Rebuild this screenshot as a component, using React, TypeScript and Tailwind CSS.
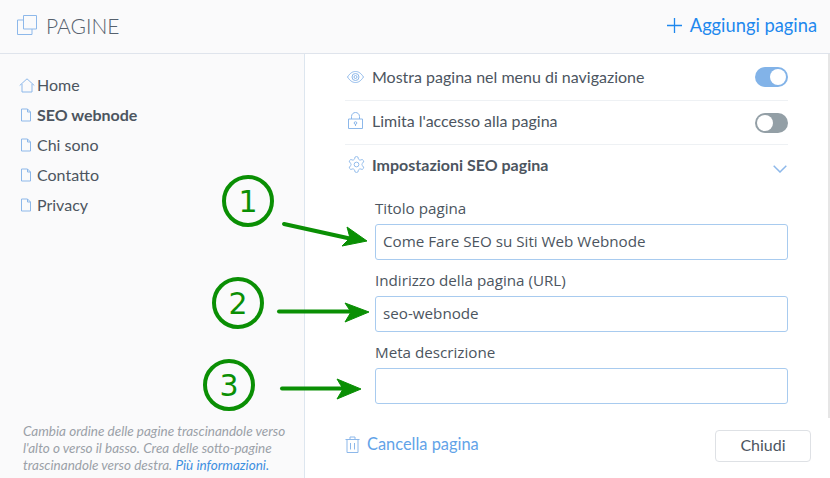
const pages = [
  { label: 'SEO webnode', bold: true },
  { label: 'Chi sono' },
  { label: 'Contatto' },
  { label: 'Privacy' },
]

function PageIcon() {
  return (
    <svg width="12" height="14" viewBox="0 0 12 14" fill="none" stroke="#8db8ea" strokeWidth="1" className="shrink-0">
      <path d="M1.5 1 H7.5 L10.5 4 V13 H1.5 Z M7.5 1 V4 H10.5" />
    </svg>
  )
}

function Toggle({ on }: { on: boolean }) {
  return (
    <div className={`flex h-5 w-[33px] items-center rounded-full px-[2px] ${on ? 'justify-end bg-[#82b3e8]' : 'justify-start bg-[#939fa6]'}`}>
      <div className="h-4 w-4 rounded-full bg-white" />
    </div>
  )
}

function Field({ label, value }: { label: string; value: string }) {
  return (
    <div className="flex flex-col">
      <label className="mb-[7px] h-[18px] font-['Open_Sans',sans-serif] text-[15.2px] leading-[18px] text-[#4c5560]">{label}</label>
      <div className="flex h-[36px] items-center rounded-[3px] border border-[#a8cbef] bg-white px-[7px] pb-[2px] font-['Open_Sans',sans-serif] text-[15.2px] text-[#4c5560]">
        {value}
      </div>
    </div>
  )
}

// green annotation: numbered ring plus arrow, drawn over the page
function Annotations() {
  return (
    <svg width="830" height="478" viewBox="0 0 830 478" className="pointer-events-none absolute left-0 top-0" fill="none" stroke="#0a8f04">
      <circle cx="248" cy="201" r="24" strokeWidth="4" />
      <circle cx="238" cy="303" r="24" strokeWidth="4" />
      <circle cx="229" cy="385" r="24" strokeWidth="4" />
      <path d="M284 224 L352 239" strokeWidth="4" strokeLinecap="round" />
      <path d="M347 227 L367 241 L342 246 L350 238 Z" fill="#0a8f04" strokeWidth="1" />
      <path d="M279 311.5 L352 311.5" strokeWidth="4" strokeLinecap="round" />
      <path d="M345 303 L369 312 L345 322 L351 312 Z" fill="#0a8f04" strokeWidth="1" />
      <path d="M282 388.5 L345 388.5" strokeWidth="4" strokeLinecap="round" />
      <path d="M337 379 L361 389 L337 399 L343 389 Z" fill="#0a8f04" strokeWidth="1" />
      <g fill="#0a8f04" stroke="none" fontFamily="'DejaVu Sans', sans-serif" fontSize="30" textAnchor="middle">
        <text x="248" y="212">1</text>
        <text x="238" y="314">2</text>
        <text x="229" y="396">3</text>
      </g>
    </svg>
  )
}

export default function App() {
  return (
    <div className="relative flex h-[478px] w-[830px] flex-col overflow-hidden bg-white font-['Lato',sans-serif] text-[#4c5560]">
      <header className="flex h-[54px] shrink-0 items-center justify-between border-b border-[#dfe4ec] bg-[#fafafb] pb-[2px] pl-[17px] pr-[13px]">
        <div className="flex items-center gap-[9px]">
          <svg width="20" height="20" viewBox="0 0 20 20" fill="none" stroke="#8db8ea" strokeWidth="1" className="-mt-[2px]">
            <path d="M6.5 .5 H19.5 V14 H6.5 Z" />
            <path d="M6.5 5 H.5 V19.5 H15 V14" />
          </svg>
          <span className="text-[21px] font-light text-[#56616e]">PAGINE</span>
        </div>
        <div className="flex items-center gap-[8px] text-[#1e88ee]">
          <svg width="15" height="15" viewBox="0 0 15 15" stroke="#1e88ee" strokeWidth="1.3">
            <path d="M7.5 0 V15 M0 7.5 H15" />
          </svg>
          <span className="text-[18.3px]">Aggiungi pagina</span>
        </div>
      </header>

      <div className="flex min-h-0 flex-1">
        <aside className="flex w-[305px] shrink-0 flex-col justify-between border-r border-[#dde6ef] bg-[#fafafb] pb-[4px] pl-[23px] pr-[14px]">
          <nav className="flex flex-col pt-[16px] text-[16px]">
            <div className="-ml-[4px] flex h-[30px] items-center gap-[2px]">
              <svg width="16" height="15" viewBox="0 0 16 15" fill="none" stroke="#8db8ea" strokeWidth="1">
                <path d="M.7 7.5 L8 .8 L15.3 7.5 M3 6 V14 H13 V6" />
              </svg>
              <span>Home</span>
            </div>
            {pages.map(p => (
              <div key={p.label} className={`-ml-[3px] flex h-[30px] items-center gap-[5px] ${p.bold ? 'font-bold' : ''}`}>
                <PageIcon />
                <span>{p.label}</span>
              </div>
            ))}
          </nav>
          <p className="text-[13.5px] italic leading-[17px] text-[#9ba1a8]">
            Cambia ordine delle pagine trascinandole verso l'alto o verso il basso. Crea delle sotto-pagine trascinandole verso destra.{' '}
            <span className="text-[#3e8fe0]">Più informazioni.</span>
          </p>
        </aside>

        <main className="flex min-w-0 flex-1 flex-col">
          <div className="flex min-h-0 flex-1">
            <div className="flex h-[364px] w-[483px] shrink-0 flex-col pl-[40px] text-[16px]">
              <div className="flex h-[47px] items-center justify-between border-b border-[#eef1f4]">
                <div className="flex items-center gap-[8px] pl-[2px]">
                  <svg width="17" height="12" viewBox="0 0 17 12" fill="none" stroke="#8db8ea" strokeWidth="1">
                    <path d="M.5 6 C3.5 1.5 6 .5 8.5 .5 C11 .5 13.5 1.5 16.5 6 C13.5 10.5 11 11.5 8.5 11.5 C6 11.5 3.5 10.5 .5 6 Z" />
                    <circle cx="8.5" cy="6" r="3.5" />
                    <circle cx="8.5" cy="6" r="1.5" />
                  </svg>
                  <span>Mostra pagina nel menu di navigazione</span>
                </div>
                <Toggle on />
              </div>
              <div className="flex h-[44px] items-center justify-between border-b border-[#eef1f4]">
                <div className="flex items-center gap-[9px] pb-[4px] pl-[3px]">
                  <svg width="15" height="17" viewBox="0 0 15 17" fill="none" stroke="#8db8ea" strokeWidth="1">
                    <path d="M.5 7 H14.5 V16.5 H.5 Z M3.5 7 V4.5 C3.5 2 5.5 .5 7.5 .5 C9.5 .5 11.5 2 11.5 4.5 V7" />
                    <circle cx="7.5" cy="11" r="1.3" />
                    <path d="M7.5 12 V14" />
                  </svg>
                  <span>Limita l'accesso alla pagina</span>
                </div>
                <Toggle on={false} />
              </div>
              <div className="flex h-[43px] items-center justify-between">
                <div className="flex items-center gap-[6px] pb-[4px] pl-[2px]">
                  <svg width="19" height="19" viewBox="0 0 24 24" fill="none" stroke="#8db8ea" strokeWidth="1.2">
                    <path d="M12.22 2h-.44a2 2 0 0 0-2 2v.18a2 2 0 0 1-1 1.73l-.43.25a2 2 0 0 1-2 0l-.15-.08a2 2 0 0 0-2.73.73l-.22.38a2 2 0 0 0 .73 2.73l.15.1a2 2 0 0 1 1 1.72v.51a2 2 0 0 1-1 1.74l-.15.09a2 2 0 0 0-.73 2.73l.22.38a2 2 0 0 0 2.73.73l.15-.08a2 2 0 0 1 2 0l.43.25a2 2 0 0 1 1 1.73V20a2 2 0 0 0 2 2h.44a2 2 0 0 0 2-2v-.18a2 2 0 0 1 1-1.73l.43-.25a2 2 0 0 1 2 0l.15.08a2 2 0 0 0 2.73-.73l.22-.39a2 2 0 0 0-.73-2.73l-.15-.08a2 2 0 0 1-1-1.74v-.5a2 2 0 0 1 1-1.74l.15-.09a2 2 0 0 0 .73-2.73l-.22-.38a2 2 0 0 0-2.73-.73l-.15.08a2 2 0 0 1-2 0l-.43-.25a2 2 0 0 1-1-1.73V4a2 2 0 0 0-2-2z" />
                    <circle cx="12" cy="12" r="3" />
                  </svg>
                  <span className="font-bold">Impostazioni SEO pagina</span>
                </div>
                <svg width="14" height="8" viewBox="0 0 14 8" fill="none" stroke="#8db8ea" strokeWidth="1.5" className="mr-px mt-[4px]">
                  <path d="M.7 .7 L7 7 L13.3 .7" />
                </svg>
              </div>
              <div className="flex flex-col gap-[11px] pl-[30px] pt-[11px]">
                <Field label="Titolo pagina" value="Come Fare SEO su Siti Web Webnode" />
                <Field label="Indirizzo della pagina (URL)" value="seo-webnode" />
                <Field label="Meta descrizione" value="" />
              </div>
            </div>
            <div className="ml-auto h-[364px] w-[2px] bg-[#e6e6e6]" />
          </div>
          <footer className="flex h-[60px] shrink-0 items-start justify-between pl-[40px] pr-[19px] pt-[12px]">
            <div className="mt-[2px] flex items-center gap-[7px] text-[16.4px] text-[#62a3e8]">
              <svg width="15" height="17" viewBox="0 0 15 17" fill="none" stroke="#8db8ea" strokeWidth="1">
                <path d="M.5 3.5 H14.5 M5 3.5 V1 H10 V3.5 M2 3.5 V16.5 H13 V3.5 M5.5 7 V13.5 M9.5 7 V13.5" />
              </svg>
              <span>Cancella pagina</span>
            </div>
            <button className="h-[32px] w-[96px] rounded-[4px] border border-[#dee1e5] bg-white pb-[2px] text-[16px] text-[#4c5560]">Chiudi</button>
          </footer>
        </main>
      </div>
      <Annotations />
    </div>
  )
}
